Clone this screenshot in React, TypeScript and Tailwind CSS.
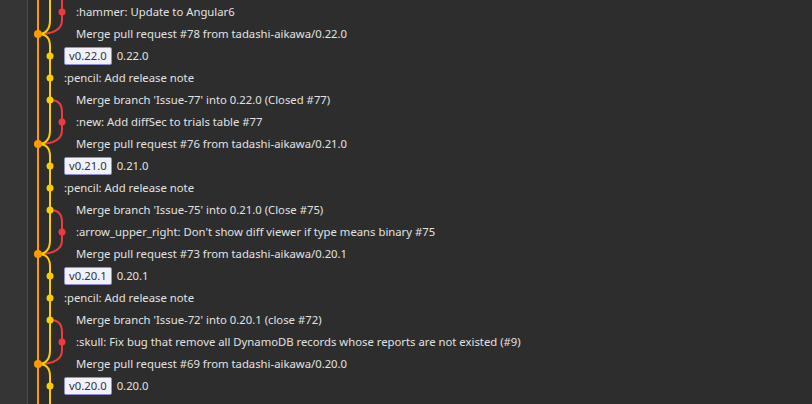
import React from "react";

type Kind = "feature" | "mergePR" | "tag" | "pencil" | "mergeBranch";

type Row = { kind: Kind; text: string; tag?: string };

const rows: Row[] = [
  { kind: "feature", text: ":hammer: Update to Angular6" },
  { kind: "mergePR", text: "Merge pull request #78 from tadashi-aikawa/0.22.0" },
  { kind: "tag", tag: "v0.22.0", text: "0.22.0" },
  { kind: "pencil", text: ":pencil: Add release note" },
  { kind: "mergeBranch", text: "Merge branch 'Issue-77' into 0.22.0 (Closed #77)" },
  { kind: "feature", text: ":new: Add diffSec to trials table #77" },
  { kind: "mergePR", text: "Merge pull request #76 from tadashi-aikawa/0.21.0" },
  { kind: "tag", tag: "v0.21.0", text: "0.21.0" },
  { kind: "pencil", text: ":pencil: Add release note" },
  { kind: "mergeBranch", text: "Merge branch 'Issue-75' into 0.21.0 (Close #75)" },
  { kind: "feature", text: ":arrow_upper_right: Don't show diff viewer if type means binary #75" },
  { kind: "mergePR", text: "Merge pull request #73 from tadashi-aikawa/0.20.1" },
  { kind: "tag", tag: "v0.20.1", text: "0.20.1" },
  { kind: "pencil", text: ":pencil: Add release note" },
  { kind: "mergeBranch", text: "Merge branch 'Issue-72' into 0.20.1 (close #72)" },
  { kind: "feature", text: ":skull: Fix bug that remove all DynamoDB records whose reports are not existed (#9)" },
  { kind: "mergePR", text: "Merge pull request #69 from tadashi-aikawa/0.20.0" },
  { kind: "tag", tag: "v0.20.0", text: "0.20.0" },
  { kind: "pencil", text: ":pencil: Add release note" },
];

const ORANGE = "#ff9a00";
const YELLOW = "#ffcc00";
const RED = "#ef3b3b";

// lane x positions inside the log panel
const O = 10;
const Y = 22;
const R = 34;
const cy = (i: number) => 12 + 22 * i;

function Graph() {
  // each cycle starts on a "merge branch" row
  const cycles = [-1, 4, 9, 14];
  return (
    <svg className="absolute left-0 top-0" width="60" height="404" viewBox="0 0 60 404">
      <line x1={O} y1={0} x2={O} y2={404} stroke={ORANGE} strokeWidth={2} />
      {cycles.map((m) => {
        const f = cy(m + 1);
        const p = cy(m + 2);
        const mb = cy(m);
        const next = cy(m + 5);
        return (
          <g key={m} fill="none" strokeWidth={2}>
            <path
              d={`M${Y} ${mb} Q${R} ${mb} ${R} ${mb + 12} L${R} ${p - 14} Q${R} ${p} ${O} ${p}`}
              stroke={RED}
            />
            <path d={`M${Y} ${mb} L${Y} ${p - 14} Q${Y} ${p} ${O} ${p}`} stroke={YELLOW} />
            <path d={`M${O} ${p} Q${Y} ${p} ${Y} ${p + 12} L${Y} ${next}`} stroke={YELLOW} />
            <circle cx={R} cy={f} r={3.5} fill={RED} stroke="none" />
          </g>
        );
      })}
      {cycles.map((m) => (
        <g key={`n${m}`}>
          <circle cx={Y} cy={cy(m)} r={3.5} fill={YELLOW} />
          <circle cx={Y} cy={cy(m + 3)} r={3.5} fill={YELLOW} />
          <circle cx={Y} cy={cy(m + 4)} r={3.5} fill={YELLOW} />
          <circle cx={O} cy={cy(m + 2)} r={4} fill={ORANGE} />
        </g>
      ))}
    </svg>
  );
}

function LogRow({ row }: { row: Row }) {
  const wide = row.kind === "feature" || row.kind === "mergePR" || row.kind === "mergeBranch";
  return (
    <div className={`flex h-[22px] items-center whitespace-nowrap ${wide ? "pl-[48px]" : "pl-[36px]"}`}>
      {row.tag && (
        <span className="mr-[5px] flex h-[18px] items-center rounded-[2px] border border-[#8f8fd0] bg-[#f2f2fc] px-[4px] text-[#333]">
          {row.tag}
        </span>
      )}
      <span>{row.text}</span>
    </div>
  );
}

export default function App() {
  return (
    <div
      className="flex h-[404px] w-[812px] overflow-hidden bg-[#2d2d2d] text-[11.3px] text-[#e2e2e2]"
      style={{ fontFamily: '"Noto Sans", sans-serif' }}
    >
      <div className="w-[28px] shrink-0 border-r border-[#4a4a4a] bg-[#353535]" />
      <div className="relative flex-1">
        <Graph />
        <div className="relative flex flex-col pt-[1px]">
          {rows.map((row, i) => (
            <LogRow key={i} row={row} />
          ))}
        </div>
      </div>
    </div>
  );
}
